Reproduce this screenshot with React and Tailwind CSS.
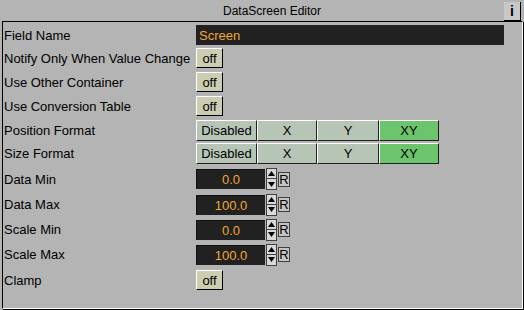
import React from 'react';

const OffButton = () => (
  <div className="w-[27px] h-[20px] bg-[#cdcdb1] border-t border-l border-t-white border-l-white border-r border-b border-r-black border-b-black flex items-center justify-center text-[13px] leading-none">
    off
  </div>
);

const Segments = () => {
  const items = [
    { label: 'Disabled', w: 'w-[61px]', on: false },
    { label: 'X', w: 'w-[60px]', on: false },
    { label: 'Y', w: 'w-[62px]', on: false },
    { label: 'XY', w: 'w-[60px]', on: true },
  ];
  return (
    <div className="flex">
      {items.map((it) => (
        <div
          key={it.label}
          className={`${it.w} h-[21px] border-t border-l border-t-white border-l-white border-r border-b border-r-[#202020] border-b-[#202020] flex items-center justify-center text-[13px] leading-none ${
            it.on ? 'bg-[#6cc46c]' : 'bg-[#b7c5b7]'
          }`}
        >
          {it.label}
        </div>
      ))}
    </div>
  );
};

const NumField = ({ value }) => (
  <div className="flex items-center">
    <div className="w-[69px] h-[20px] bg-[#212121] border-t border-l border-t-[#101010] border-l-[#101010] flex items-center justify-center text-[13px] leading-none text-[#f0a830]">
      {value}
    </div>
    <div className="w-[11px] h-[22px] ml-[1px] flex flex-col">
      <div className="h-[11px] bg-[#d8d8d8] border border-[#404040] flex items-center justify-center">
        <svg width="7" height="5" viewBox="0 0 7 5">
          <path d="M3.5 0 L7 5 L0 5 Z" fill="#000" />
        </svg>
      </div>
      <div className="h-[11px] bg-[#d8d8d8] border border-[#404040] border-t-0 flex items-center justify-center">
        <svg width="7" height="5" viewBox="0 0 7 5">
          <path d="M0 0 L7 0 L3.5 5 Z" fill="#000" />
        </svg>
      </div>
    </div>
    <div className="w-[12px] h-[15px] ml-[1px] border border-[#404040] bg-[#c4c4c4] flex items-center justify-center text-[13px] leading-none">
      R
    </div>
  </div>
);

const Row = ({ label, h, children }) => (
  <div className={`flex items-center ${h}`}>
    <div className="w-[193px] pl-[1px] text-[13px] leading-none text-black whitespace-nowrap">{label}</div>
    {children}
  </div>
);

export default function App() {
  return (
    <div
      className="w-[524px] h-[310px] bg-[#b4b4b4] flex flex-col text-black"
      style={{ fontFamily: '"Liberation Sans", Arial, sans-serif' }}
    >
      <div className="h-[21px] flex items-center">
        <div className="flex-1 pl-[40px] text-center text-[12px] leading-none">DataScreen Editor</div>
        <div className="w-[17px] h-[19px] mr-[3px] mt-[1px] bg-[#c8c8c8] border-r border-b border-black flex items-center justify-center text-[14px] font-bold leading-none">
          i
        </div>
      </div>
      <div className="flex-1 ml-[2px] mb-[1px] mr-[1px] border-t border-l border-black border-r border-b border-r-white border-b-white shadow-[1px_1px_0_0_#000] flex flex-col pt-[2px]">
        <Row label="Field Name" h="h-[22px]">
          <div className="w-[308px] h-[20px] bg-[#212121] flex items-center pl-[3px] text-[13px] leading-none text-[#f0a830]">
            Screen
          </div>
        </Row>
        <Row label="Notify Only When Value Change" h="h-[24px]">
          <OffButton />
        </Row>
        <Row label="Use Other Container" h="h-[24px]">
          <OffButton />
        </Row>
        <Row label="Use Conversion Table" h="h-[24px]">
          <OffButton />
        </Row>
        <Row label="Position Format" h="h-[24px]">
          <Segments />
        </Row>
        <Row label="Size Format" h="h-[22px]">
          <Segments />
        </Row>
        <Row label="Data Min" h="h-[26px] mt-[2px]">
          <NumField value="0.0" />
        </Row>
        <Row label="Data Max" h="h-[25px]">
          <NumField value="100.0" />
        </Row>
        <Row label="Scale Min" h="h-[25px]">
          <NumField value="0.0" />
        </Row>
        <Row label="Scale Max" h="h-[25px]">
          <NumField value="100.0" />
        </Row>
        <Row label="Clamp" h="h-[26px]">
          <OffButton />
        </Row>
      </div>
    </div>
  );
}
